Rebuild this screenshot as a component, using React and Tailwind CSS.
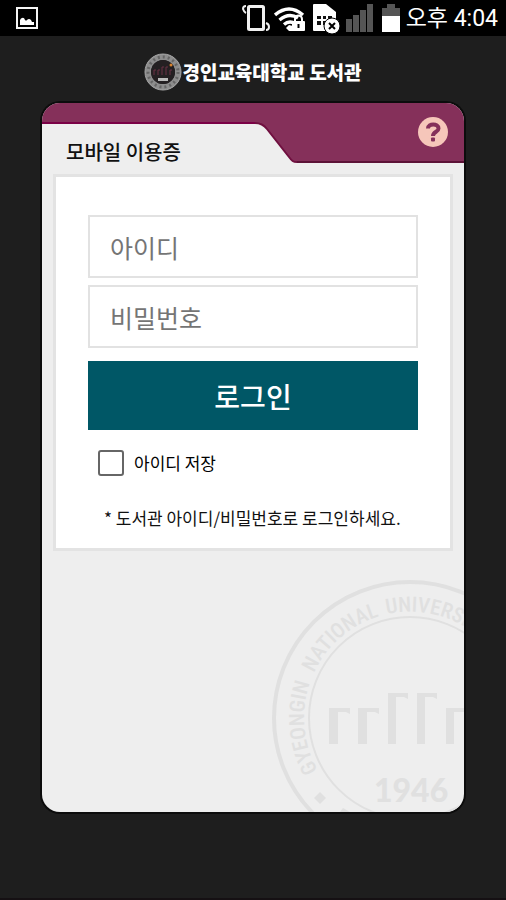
import React, { useState } from 'react'

function StatusBar() {
  return (
    <div className="flex h-9 items-center justify-between bg-black pl-4 pr-2 text-white">
      <svg width="22" height="22" viewBox="0 0 22 22" aria-hidden="true">
        <rect x="1" y="1" width="20" height="20" fill="none" stroke="#f5f5f5" strokeWidth="2" />
        <path d="M4 18v-5q1-2 2-2q2-1 3 2q1 1 2 0q2-2 4 0l1 2h2v3z" fill="#fff" />
      </svg>

      <div className="flex items-center gap-1">
        {/* Vibrate */}
        <svg width="28" height="28" viewBox="0 0 28 28" fill="none" stroke="#f0f0f0" aria-hidden="true">
          <rect x="6.5" y="2.5" width="15" height="23" rx="1" strokeWidth="3" />
          <path d="M4 2Q1 2 1 5Q2 8 4 9M24 19Q27 20 27 23Q27 26 24 26" strokeWidth="2" />
        </svg>
        {/* Secured wifi */}
        <svg width="34" height="28" viewBox="0 0 34 28" aria-hidden="true">
          <g fill="none" stroke="#fff" strokeWidth="3.4">
            <path d="M1 11Q15 -1 29 11" />
            <path d="M5.500 16Q15 8 24 14" />
            <path d="M10 20.500Q14 17 19 18.500" />
          </g>
          <path d="M12 24l3-3 4 1v5h-4z" fill="#fff" />
          <rect x="18" y="17" width="13" height="10" rx="1" fill="#fff" />
          <path d="M21 18v-3a3.500 3.500 0 0 1 7 0v3" fill="none" stroke="#fff" strokeWidth="2" />
          <path d="M24.500 20v4" stroke="#000" strokeWidth="2" />
        </svg>
        {/* No SIM */}
        <svg width="28" height="32" viewBox="0 0 28 32" aria-hidden="true">
          <path d="M1 3Q1 2 2 2H14L24 10V29H2Q1 29 1 28z" fill="#fff" />
          <path d="M5 14h4v3H5zM11 14h3v3h-3zM16 14h4v3h-4zM5 19h4v4H5zM11 19h3v4h-3z" fill="#111" />
          <circle cx="20" cy="24" r="8" fill="#fff" stroke="#000" strokeWidth="1" />
          <path d="M17 21l6 6M23 21l-6 6" stroke="#000" strokeWidth="2" />
        </svg>
        {/* Signal */}
        <svg className="ml-0.5" width="28" height="28" viewBox="0 0 28 28" fill="#555" aria-hidden="true">
          <rect x="0" y="15" width="6" height="13" />
          <rect x="7" y="11" width="6" height="17" />
          <rect x="14" y="6" width="6" height="22" />
          <rect x="21" y="0" width="6" height="28" />
        </svg>
        {/* Battery */}
        <svg className="ml-1" width="18" height="28" viewBox="0 0 18 28" aria-hidden="true">
          <path d="M5 0h8v4h5v9H0V4h5z" fill="#555" />
          <rect y="12" width="18" height="16" fill="#fff" />
        </svg>
        <span className="ml-0.5 pt-0.5 font-[Roboto,'Noto_Sans_CJK_KR',sans-serif] text-[23px] leading-8 whitespace-nowrap">
          오후 4:04
        </span>
      </div>
    </div>
  )
}

function Brand() {
  return (
    <header className="flex h-[67px] items-center justify-center pt-1">
      <svg width="38" height="38" viewBox="0 0 38 38" aria-hidden="true">
        <circle cx="19" cy="19" r="15" fill="none" stroke="#8d8d8d" strokeWidth="6" />
        <circle cx="19" cy="19" r="15" fill="none" stroke="#666" strokeWidth="3" strokeDasharray="2 3" />
        <circle cx="19" cy="19" r="18" fill="none" stroke="#a5a5a5" strokeWidth="1" />
        <circle cx="19" cy="19" r="12" fill="#242022" />
        <path
          d="M10 22v-5h2M14 22v-5h2M18 22v-8h2M22 22v-8h2M26 22v-5h2"
          fill="none"
          stroke="#6b3045"
          strokeWidth="1"
        />
        <circle cx="27" cy="12" r="1.500" fill="#d9832c" />
        <rect x="14" y="25" width="10" height="3" fill="#bbb" />
      </svg>
      <h1 className="text-[19px] font-black leading-7 whitespace-nowrap text-white">경인교육대학교 도서관</h1>
    </header>
  )
}

function TabHeader() {
  return (
    <div className="flex h-[60px] items-end bg-[#85305a]">
      <h2 className="h-[41px] w-[213px] border-t-2 border-[#7a0046] bg-[#eee] pl-6 pt-4 text-[20px] font-medium leading-6 text-[#111]">
        모바일 이용증
      </h2>
      <svg className="flex-none" width="42" height="41" viewBox="0 0 42 41" aria-hidden="true">
        <path d="M0 1C6 1 9 3 12 7L34 35C37 39 38 40 42 40V41H0z" fill="#eee" />
        <path d="M0 1C6 1 9 3 12 7L34 35C37 39 38 40 42 40" fill="none" stroke="#701040" strokeWidth="2" />
      </svg>
      <div className="flex h-full flex-1 justify-end border-b-2 border-[#5c1237] pr-4 pt-[14px]">
        <button type="button" aria-label="도움말" className="h-[30px] w-[30px] rounded-full bg-[#f6c6ba]">
          <svg width="30" height="30" viewBox="0 0 30 30" aria-hidden="true">
            <path
              d="M10 11.500C10 6 20.500 6 20.500 11.500C20.500 15 15 14.500 15 19"
              fill="none"
              stroke="#85305a"
              strokeWidth="4"
            />
            <rect x="13" y="20.500" width="4" height="4" rx="1" fill="#85305a" />
          </svg>
        </button>
      </div>
    </div>
  )
}

function LoginForm() {
  const [id, setId] = useState('')
  const [password, setPassword] = useState('')
  const [saveId, setSaveId] = useState(false)

  const field =
    'block w-full border-2 border-[#e2e2e2] bg-white px-5 text-[25px] text-[#333] placeholder:text-[#757575] outline-none'

  return (
    <form
      className="mx-[11px] mt-[11px] border-3 border-[#e3e3e3] bg-white px-8 pb-[18px] pt-[38px]"
      onSubmit={(e) => e.preventDefault()}
    >
      <input
        className={`${field} h-[63px]`}
        aria-label="아이디"
        placeholder="아이디"
        value={id}
        onChange={(e) => setId(e.target.value)}
      />
      <input
        type="password"
        className={`${field} mt-[7px] h-[63px]`}
        aria-label="비밀번호"
        placeholder="비밀번호"
        value={password}
        onChange={(e) => setPassword(e.target.value)}
      />
      <button type="submit" className="mt-[13px] h-[69px] w-full bg-[#005766] text-[28px] font-medium text-white">
        로그인
      </button>
      <div className="mt-5 flex h-[26px] items-center gap-[10px] pl-[10px]">
        <input
          id="save-id"
          type="checkbox"
          className="h-[26px] w-[26px] appearance-none rounded-[3px] border-2 border-[#666] bg-white checked:bg-[#005766]"
          checked={saveId}
          onChange={(e) => setSaveId(e.target.checked)}
        />
        <label htmlFor="save-id" className="text-[17px] leading-6 text-black">
          아이디 저장
        </label>
      </div>
      <p className="mt-[30px] pl-4 text-[17px] leading-6 whitespace-nowrap text-[#111]">
        * 도서관 아이디/비밀번호로 로그인하세요.
      </p>
    </form>
  )
}

// University seal, cropped by the card's bottom right corner
function SealWatermark() {
  return (
    <svg
      className="pointer-events-none absolute bottom-0 right-0"
      width="192"
      height="232"
      viewBox="0 0 192 232"
      aria-hidden="true"
    >
      <defs>
        <path id="seal-arc" d="M47 192A106 106 0 1 1 229 192" />
      </defs>
      <g fill="none" stroke="#e0e0e0">
        <circle cx="138" cy="138" r="136" strokeWidth="4" />
        <circle cx="138" cy="138" r="101" strokeWidth="2" />
      </g>
      <g fill="#e0e0e0">
        <g className="font-['Liberation_Sans_Narrow','Roboto_Condensed','Open_Sans_Condensed',sans-serif] text-[21px] font-medium">
          <text>
            <textPath href="#seal-arc" startOffset="2">
              GYEONGIN
            </textPath>
          </text>
          <text>
            <textPath href="#seal-arc" startOffset="103">
              NATIONAL
            </textPath>
          </text>
          <text>
            <textPath href="#seal-arc" startOffset="200">
              UNIVERSITY
            </textPath>
          </text>
        </g>
        <path d="M57 128h21v6l-4-2h-8v32h-9zM86 128h21v6l-4-2h-8v32h-9zM116 113h20v6l-4-2h-8v47h-8zM145 113h20v6l-4-2h-8v47h-8zM174 128h18v4h-10v32h-8z" />
        <text x="102" y="222" className="font-[Lato,sans-serif] text-[32px] font-black">
          1946
        </text>
        <path d="M48 212l6 6-6 6-6-6z" />
        <path d="M68 232l3-4 7 4z" />
      </g>
    </svg>
  )
}

export default function App() {
  return (
    <div className="flex min-h-screen flex-col border-b-2 border-[#151013] bg-[#1e1e1e] font-['Noto_Sans_CJK_KR',sans-serif]">
      <StatusBar />
      <Brand />
      <main className="relative mx-[42px] mb-[86px] flex-1 overflow-hidden rounded-[18px] bg-[#eee] shadow-[0_0_0_2px_#0c0c0c]">
        <SealWatermark />
        <TabHeader />
        <LoginForm />
      </main>
    </div>
  )
}
